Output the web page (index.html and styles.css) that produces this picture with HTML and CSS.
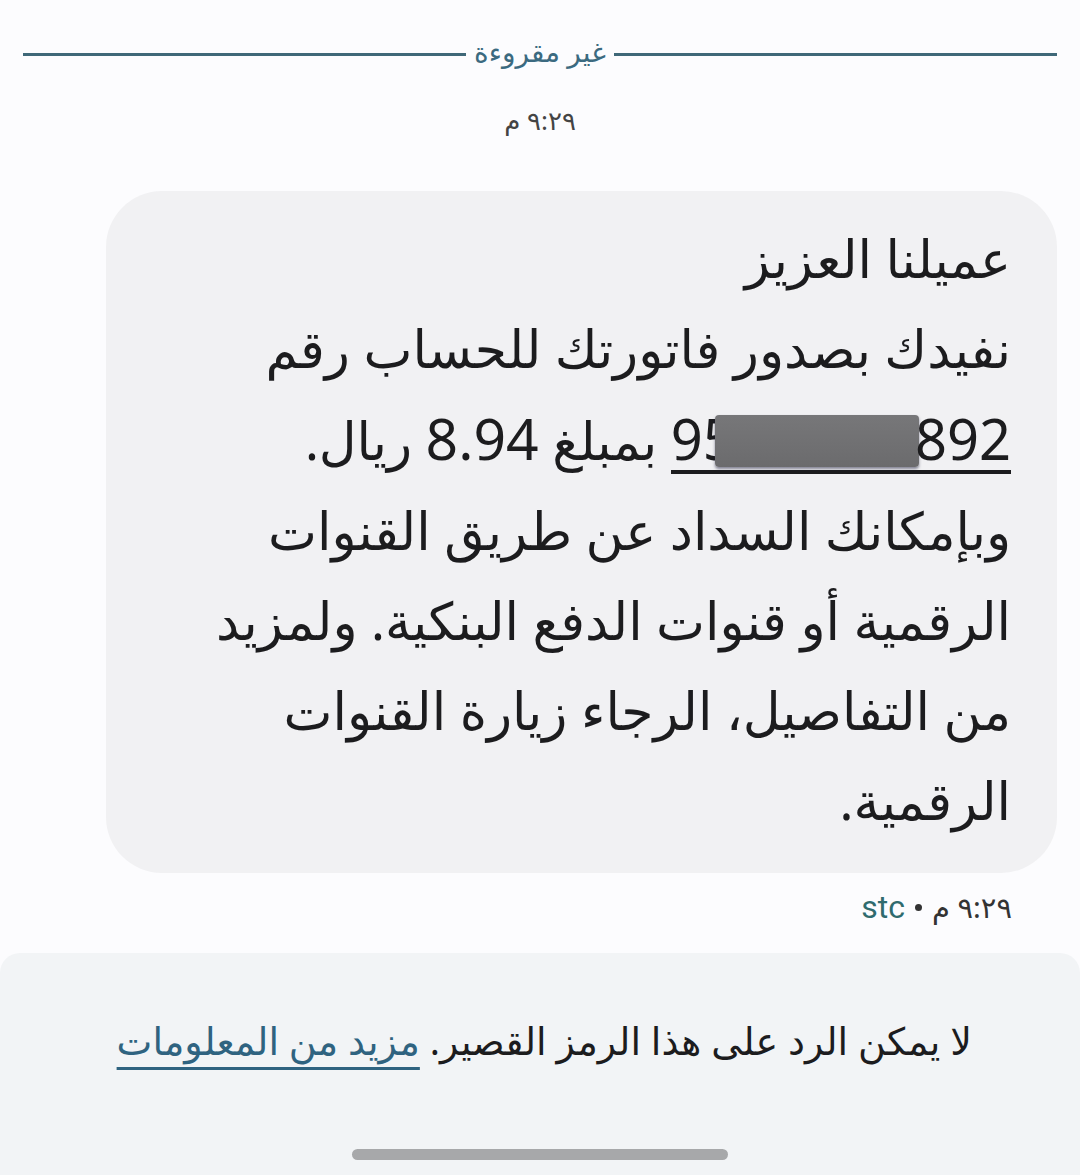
FILE: index.html
```html
<!DOCTYPE html>
<html lang="ar" dir="rtl">
<head>
<meta charset="utf-8">
<link rel="stylesheet" href="styles.css">
</head>
<body>
<div class="page">
  <div class="divider">
    <span class="line"></span>
    <span class="divider-label">غير مقروءة</span>
    <span class="line"></span>
  </div>
  <div class="stamp">٩:٢٩ م</div>
  <div class="bubble-row">
    <div class="bubble">
      <div class="ln">عميلنا العزيز</div>
      <div class="ln">نفيدك بصدور فاتورتك للحساب رقم</div>
      <div class="ln"><span class="acct" dir="ltr">95<span class="redact" aria-hidden="true"></span>892</span> بمبلغ <span class="num">8.94</span> ريال.</div>
      <div class="ln">وبإمكانك السداد عن طريق القنوات</div>
      <div class="ln">الرقمية أو قنوات الدفع البنكية. ولمزيد</div>
      <div class="ln">من التفاصيل، الرجاء زيارة القنوات</div>
      <div class="ln">الرقمية.</div>
    </div>
  </div>
  <div class="meta"><span class="meta-time">٩:٢٩ م</span><span class="dot"></span><span class="sender">stc</span></div>
  <div class="footer">
    <p class="note">لا يمكن الرد على هذا الرمز القصير. <a class="more" href="#">مزيد من المعلومات</a></p>
    <div class="handle"></div>
  </div>
</div>
</body>
</html>
```
FILE: styles.css
```css
* { box-sizing: border-box; }
html, body { margin: 0; padding: 0; }
body {
  width: 1080px;
  height: 1175px;
  background: #fcfcfe;
  font-family: "Noto Sans", "DejaVu Sans", sans-serif;
  color: #1d1d1f;
  overflow: hidden;
}
.page {
  display: flex;
  flex-direction: column;
  height: 1175px;
}
.divider {
  display: flex;
  align-items: center;
  gap: 8px;
  padding: 30px 23px 0 23px;
  height: 78px;
}
.line {
  flex: 1;
  height: 3px;
  background: #3f6878;
}
.divider-label {
  color: #3b6a80;
  font-size: 28px;
  line-height: 40px;
  padding-bottom: 6px;
}
.stamp {
  text-align: center;
  color: #444;
  font-size: 26px;
  margin-top: 22px;
  height: 40px;
  line-height: 40px;
}
.bubble-row {
  display: flex;
  padding: 51px 23px 0 23px;
}
.bubble {
  width: 951px;
  height: 682px;
  background: #f1f1f3;
  border-radius: 56px;
  padding: 22px 46px 0 20px;
}
.ln {
  font-size: 52px;
  line-height: 90px;
  white-space: nowrap;
  color: #1c1c1e;
}
.num {
  font-size: 57px;
}
.acct {
  display: inline-block;
  font-size: 56px;
  line-height: 64px;
  border-bottom: 4px solid #1c1c1e;
}
.redact {
  display: inline-block;
  width: 204px;
  height: 52px;
  margin-left: -20px;
  margin-right: -4px;
  vertical-align: -7px;
  background: linear-gradient(180deg, #777779, #6b6b6d);
  border-radius: 4px;
  box-shadow: 0 2px 3px rgba(40,40,70,0.55);
}
.meta {
  display: flex;
  align-items: center;
  gap: 10px;
  padding: 0 68px 0 0;
  margin-top: 14px;
  height: 40px;
  font-size: 29px;
  line-height: 40px;
}
.meta-time { color: #333; }
.dot {
  width: 7px;
  height: 7px;
  border-radius: 50%;
  background: #333;
}
.sender { color: #2f6b6e; font-family: "Roboto", sans-serif; font-size: 32px; }
.footer {
  margin-top: 26px;
  flex: 1;
  background: #f2f4f6;
  border-radius: 20px 20px 0 0;
  display: flex;
  flex-direction: column;
}
.note {
  margin: 62px 108px 0 0;
  font-size: 38px;
  line-height: 50px;
  color: #1c1c1e;
}
.more {
  color: #2f6380;
  text-decoration: underline;
  text-decoration-thickness: 3px;
  text-underline-offset: 12px;
}
.handle {
  margin: 84px auto 0 auto;
  width: 376px;
  height: 11px;
  background: #a7a8aa;
  border-radius: 6px;
}
```
